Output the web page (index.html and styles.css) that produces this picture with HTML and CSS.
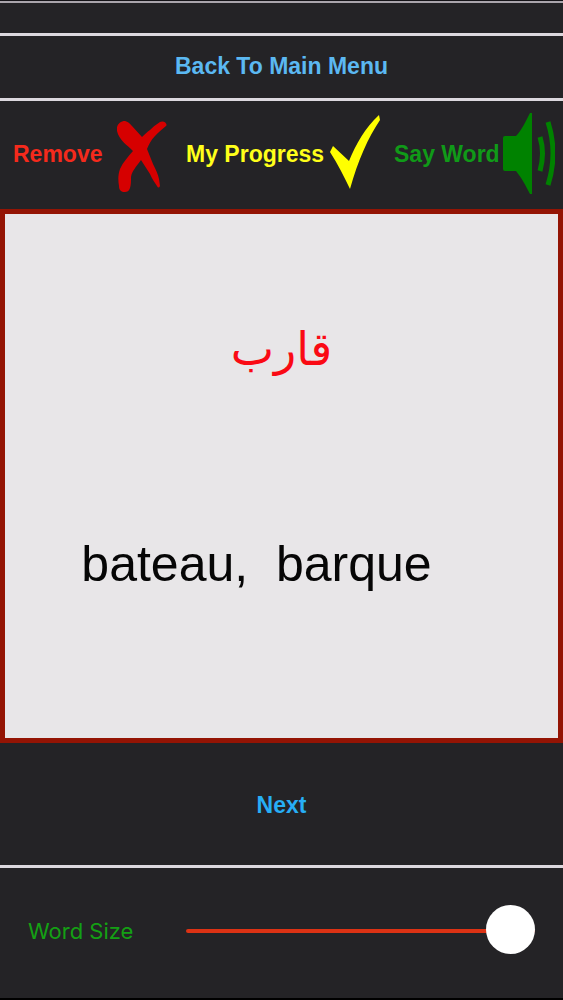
FILE: index.html
```html
<!DOCTYPE html>
<html lang="en">
<head>
    <meta charset="UTF-8">
    <meta name="viewport" content="width=device-width, initial-scale=1.0">
    <title>Flash Cards</title>
    <link rel="stylesheet" href="styles.css">
</head>
<body>
    <div class="status-bar"></div>

    <header class="menu-bar">
        <a href="#menu">Back To Main Menu</a>
    </header>

    <div class="toolbar">
        <button type="button" class="remove">
            Remove
            <svg width="50" height="78" viewBox="0 -6 50 78" fill="#d60000" aria-hidden="true">
                <path d="M0 10C-1 4 3 0 8 0C12 1 13 3 15 5L25 16C28 13 30 11 33 9Q38 4 43 1C47 -1 51 3 49 5C45 8 41 12 38 15C34 19 32 23 30 28L36 43C39 49 41 53 42 58L43 65C42 67 41 67 40 65C38 62 35 58 33 53L24 39C19 46 15 50 14 56C14 60 14 64 13 67C12 70 10 71 8 71C4 71 2 69 2 65C1 59 1 54 3 48C6 41 11 36 16 30C10 24 2 19 0 10Z"/>
            </svg>
        </button>
        <button type="button" class="progress">
            My Progress
            <svg width="50" height="78" viewBox="0 0 50 78" fill="#ffff00" aria-hidden="true">
                <path d="M0 37L3 31L19 46C26 29 35 13 49 0L50 5C38 23 28 45 20 74C14 62 8 49 0 37Z"/>
            </svg>
        </button>
        <button type="button" class="say">
            Say Word
            <svg width="53" height="82" viewBox="0 0 53 82" aria-hidden="true">
                <path fill="#008200" d="M3 23H14C19 18 24 8 28 0H30V81H28C24 73 19 64 14 58H3Q1 58 1 56V25Q1 23 3 23Z"/>
                <path fill="none" stroke="#008200" stroke-width="5" d="M38 24Q43 40 38 58M46 9Q56 40 46 72"/>
            </svg>
        </button>
    </div>

    <main class="card">
        <p class="word" lang="ar" dir="rtl">قارب</p>
        <p class="translation" lang="fr">bateau,  barque</p>
    </main>

    <div class="next-bar">
        <button type="button" class="next">Next</button>
    </div>

    <footer class="size-bar">
        <label for="word-size">Word Size</label>
        <input type="range" id="word-size" min="0" max="100" value="100">
    </footer>
</body>
</html>
```

FILE: styles.css
```css
* {
    box-sizing: border-box;
}

body {
    margin: 0;
    min-height: 100vh;
    display: flex;
    flex-direction: column;
    background-color: #242326;
    border-top: 1px solid #151317;
    border-bottom: 2px solid #000;
    font-family: "Liberation Sans", Arial, sans-serif;
    font-size: 23px;
    font-weight: bold;
}

button {
    padding: 0;
    background: none;
    border: none;
    font: inherit;
    cursor: pointer;
}

.status-bar {
    height: 35px;
    border-top: 2px solid #aaa5ac;
    border-bottom: 3px solid #dcd8de;
}

.menu-bar {
    height: 65px;
    padding-bottom: 2px;
    display: flex;
    justify-content: center;
    align-items: center;
    border-bottom: 3px solid #dcd8de;
}

.menu-bar a {
    color: #5bb8f2;
    text-decoration: none;
}

.toolbar {
    height: 108px;
    padding-left: 13px;
    padding-bottom: 2px;
    display: grid;
    grid-template-columns: 173fr 208fr 169fr;
}

.toolbar button {
    display: flex;
    align-items: center;
    white-space: nowrap;
}

.toolbar svg {
    flex: none;
}

.remove {
    gap: 15px;
    color: #f52a1c;
}

.progress {
    gap: 6px;
    color: #ffff1a;
}

.say {
    gap: 2px;
    color: #109a18;
}

.card {
    flex: 534;
    padding-top: 100px;
    background-color: #e8e6e8;
    border: 5px solid #941404;
    font-weight: normal;
    text-align: center;
}

.word {
    margin: 0;
    height: 80px;
    line-height: 70px;
    color: #fa0a14;
    font-family: "DejaVu Sans", sans-serif;
    font-size: 46px;
}

.translation {
    margin: 140px 0 0;
    padding-right: 50px;
    line-height: 60px;
    color: #060606;
    font-size: 50px;
    white-space: pre;
}

.next-bar {
    height: 125px;
    padding-top: 2px;
    display: flex;
    justify-content: center;
    align-items: center;
    border-bottom: 3px solid #dcd8de;
}

.next {
    color: #27aef5;
}

.size-bar {
    height: 130px;
    padding: 0 28px;
    padding-bottom: 4px;
    display: flex;
    align-items: center;
}

.size-bar label {
    width: 158px;
    color: #14a014;
    font-family: Inter, sans-serif;
    font-size: 22px;
    font-weight: normal;
}

.size-bar input {
    flex: 1;
    min-width: 0;
    height: 50px;
    margin: 0;
    background: none;
    appearance: none;
    -webkit-appearance: none;
}

.size-bar input::-webkit-slider-runnable-track {
    height: 4px;
    background-color: #dc3214;
    border-radius: 2px;
}

.size-bar input::-webkit-slider-thumb {
    -webkit-appearance: none;
    width: 49px;
    height: 49px;
    margin-top: -24px;
    background-color: #fff;
    border-radius: 50%;
}
```
